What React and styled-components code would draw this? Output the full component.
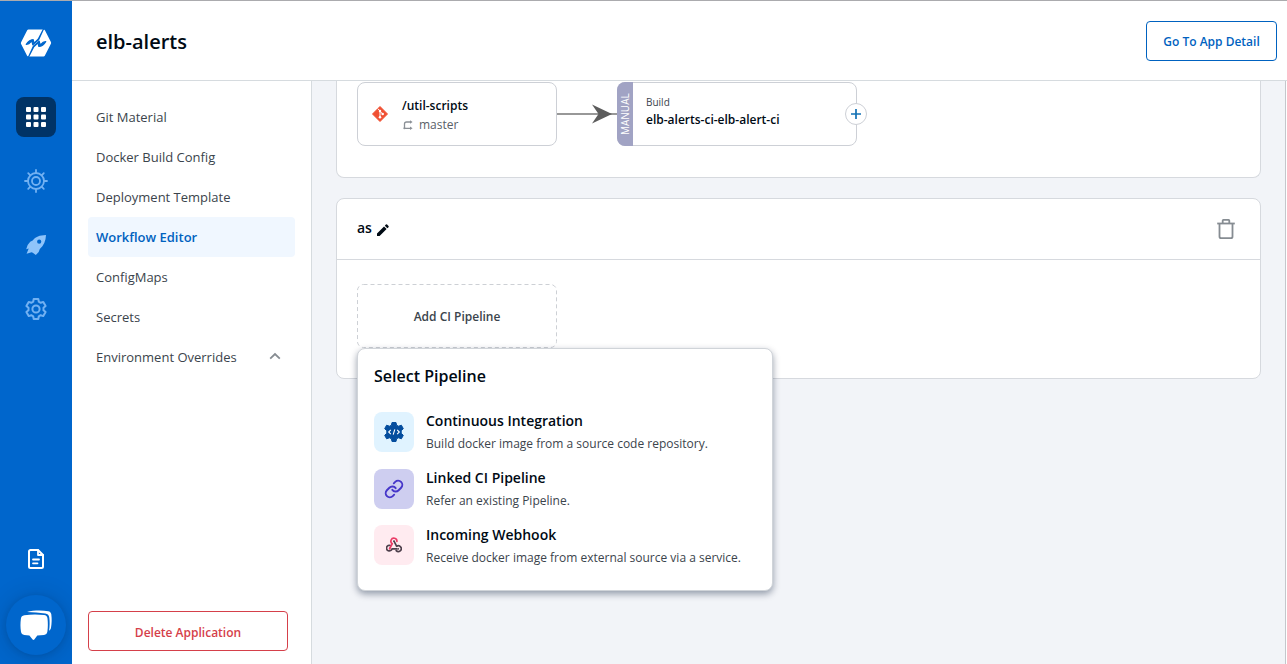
import React from "react";
import styled, { createGlobalStyle, css } from "styled-components";

const GlobalStyle = createGlobalStyle`
  *, *::before, *::after { box-sizing: border-box; }
  html, body, #root { height: 100%; }
  body {
    margin: 0;
    font-family: "Open Sans", "Noto Sans", sans-serif;
    font-size: 13px;
    color: #000a14;
    background: #f2f4f8;
    overflow: hidden;
  }
  button { font-family: inherit; cursor: pointer; }
  svg { display: block; flex: none; }
`;

const Shell = styled.div`
  display: flex;
  height: 100vh;
  border-top: 1px solid #ababae;
`;

const Rail = styled.nav`
  width: 72px;
  flex: none;
  display: flex;
  flex-direction: column;
  align-items: center;
  background: #0066cc;
  padding-top: 22px;
`;

const Brand = styled.a`
  height: 40px;
  display: flex;
  align-items: center;
`;

const RailList = styled.div`
  display: flex;
  flex-direction: column;
  gap: 24px;
  margin-top: 34px;
`;

const RailItem = styled.a`
  width: 40px;
  height: 40px;
  border-radius: 8px;
  display: flex;
  align-items: center;
  justify-content: center;
  background: ${(p) => (p.$active ? "#003366" : "transparent")};
`;

const RailFooter = styled.div`
  margin-top: auto;
  display: flex;
  flex-direction: column;
  align-items: center;
  padding-bottom: 9px;
  gap: 16px;
`;

const ChatButton = styled.button`
  width: 60px;
  height: 60px;
  border: 0;
  padding: 0;
  border-radius: 50%;
  background: #0066cc;
  display: flex;
  align-items: center;
  justify-content: center;
  box-shadow: 0 1px 6px rgba(0, 0, 0, 0.1), 0 2px 26px rgba(0, 0, 0, 0.16);
`;

const Page = styled.div`
  flex: 1;
  min-width: 0;
  display: flex;
  flex-direction: column;
  background: #fff;
`;

const Header = styled.header`
  height: 80px;
  flex: none;
  display: flex;
  align-items: center;
  justify-content: space-between;
  padding: 0 10px 0 24px;
  border-bottom: 1px solid #d6dbdf;
`;

const Title = styled.h1`
  margin: 0;
  padding-top: 2px;
  font-size: 20px;
  line-height: 30px;
  font-weight: 600;
  color: #000a14;
`;

const OutlineButton = styled.button`
  height: 40px;
  width: ${(p) => p.$width}px;
  padding: 2px 0 0;
  background: #fff;
  border: 1px solid ${(p) => p.$color};
  border-radius: 4px;
  color: ${(p) => p.$color};
  font-size: 12px;
  font-weight: 600;
`;

const Body = styled.div`
  flex: 1;
  min-height: 0;
  display: flex;
`;

const Menu = styled.aside`
  width: 240px;
  flex: none;
  display: flex;
  flex-direction: column;
  align-items: flex-start;
  padding: 16px 16px 13px;
  border-right: 1px solid #d6dbdf;
`;

const MenuItem = styled.a`
  width: 207px;
  height: 40px;
  display: flex;
  align-items: center;
  justify-content: space-between;
  padding: 0 12px 0 8px;
  border-radius: 4px;
  font-size: 13px;
  color: #3b444c;
  ${(p) =>
    p.$active &&
    css`
      background: #f0f7ff;
      color: #0062c0;
      font-weight: 600;
    `}
`;

const MenuFooter = styled.div`
  margin-top: auto;
`;

const Canvas = styled.main`
  flex: 1;
  min-width: 0;
  padding: 0 24px;
  background: #f2f4f8;
  border-right: 1px solid #c4c7cc;
  margin-right: 1px;
`;

const Card = styled.section`
  border: 1px solid #d6d9de;
  border-radius: 8px;
  background: #fff;
  ${(p) =>
    p.$clipped &&
    css`
      border-top: 0;
      border-top-left-radius: 0;
      border-top-right-radius: 0;
      margin-bottom: 20px;
    `}
`;

const CardHeader = styled.div`
  height: 61px;
  display: flex;
  align-items: center;
  justify-content: space-between;
  padding: 0 22px 0 20px;
  border-bottom: 1px solid #d6d9de;
`;

const CardTitle = styled.div`
  display: flex;
  align-items: flex-end;
  gap: 4px;
  font-size: 14px;
  line-height: 18px;
  padding-bottom: 3px;
  font-weight: 600;
`;

const CardBody = styled.div`
  padding: ${(p) => p.$top}px 20px ${(p) => p.$bottom}px;
`;

const Flow = styled.div`
  display: flex;
  align-items: center;
`;

const Node = styled.div`
  position: relative;
  width: ${(p) => p.$width}px;
  height: 64px;
  display: flex;
  align-items: center;
  background: #fff;
  border: 1px solid #cdd0d6;
  border-radius: 8px;
`;

const SourceIcon = styled.span`
  width: 44px;
  display: flex;
  justify-content: center;
`;

const SourceText = styled.div`
  padding-top: 3px;
`;

const NodeTitle = styled.div`
  font-size: 12px;
  line-height: 18px;
  font-weight: 600;
  white-space: nowrap;
`;

const Branch = styled.div`
  display: flex;
  align-items: center;
  gap: 5px;
  font-size: 12px;
  line-height: 20px;
  color: #596168;
`;

const ModeTag = styled.span`
  width: 16px;
  height: 64px;
  margin: -1px 0 -1px -1px;
  flex: none;
  display: flex;
  align-items: center;
  justify-content: center;
  writing-mode: vertical-rl;
  transform: rotate(180deg);
  border-radius: 0 8px 8px 0;
  background: #a1a3c4;
  color: #fff;
  font-size: 10px;
`;

const BuildText = styled.div`
  padding-left: 13px;
  padding-bottom: 6px;
`;

const NodeKind = styled.div`
  font-size: 10px;
  line-height: 16px;
  margin-bottom: 1px;
  color: #3b444c;
`;

const AddTarget = styled.button`
  position: absolute;
  right: -11px;
  top: 20px;
  width: 22px;
  height: 22px;
  border-radius: 50%;
  border: 1px solid #cdd0d6;
  background: #fff;
  padding: 0;
  display: flex;
  align-items: center;
  justify-content: center;
`;

const AddWrap = styled.div`
  position: relative;
  width: 200px;
`;

const AddButton = styled.button`
  width: 200px;
  height: 64px;
  border: 0;
  padding: 0;
  position: relative;
  background: transparent;
  font-size: 12px;
  font-weight: 600;
  color: #3b444c;
`;

const DashFrame = styled.svg`
  position: absolute;
  inset: 0;
`;

const Popup = styled.div`
  position: absolute;
  top: 64px;
  left: 0;
  width: 416px;
  height: 243px;
  padding: 15px 16px;
  border: 1px solid #d0d4d9;
  border-radius: 8px;
  background: #fff;
  box-shadow: 0 3px 7px rgba(0, 20, 50, 0.4);
`;

const PopupTitle = styled.h2`
  margin: 0 0 21px;
  font-size: 16px;
  line-height: 24px;
  font-weight: 600;
`;

const Options = styled.div`
  display: flex;
  flex-direction: column;
`;

const Option = styled.div`
  height: 57px;
  display: flex;
  gap: 12px;
`;

const OptionIcon = styled.span`
  width: 40px;
  height: 40px;
  margin-top: ${(p) => p.$offset}px;
  border-radius: 8px;
  flex: none;
  display: flex;
  align-items: center;
  justify-content: center;
  background: ${(p) => p.$bg};
`;

const OptionTitle = styled.div`
  font-size: 14px;
  line-height: 24px;
  font-weight: 600;
`;

const OptionText = styled.div`
  font-size: 12px;
  line-height: 21px;
  color: #3b444c;
  white-space: nowrap;
`;

const Logo = () => (
  <svg width="32" height="28" viewBox="0 0 32 28">
    <path
      d="M8.400.5h15.200c.6 0 1 .3 1.300.8l6 11.700c.3.600.3 1.200 0 1.800l-6.100 12c-.3.500-.7.700-1.200.7H8.400c-.6 0-1-.3-1.300-.8L1.100 15c-.3-.600-.3-1.200 0-1.800L7.200 1.200c.3-.5.700-.7 1.200-.7Z"
      fill="#fff"
    />
    <g fill="#0066cc" stroke="#0066cc" strokeWidth="1.200" strokeLinejoin="round">
      <path d="M23.500 0 18.200 10.200 14 14.200 13.200 10.600Q9 10.800 6.300 15.400L9 14.600Q11 12.500 12 12.400L12.800 15.800 18.600 10.800Z" />
      <path d="M8.500 28 13.800 17.800 18 13.800 18.800 17.400Q23 17.200 25.700 12.600L23 13.400Q21 15.500 20 15.600L19.200 12.200 13.400 17.200Z" />
    </g>
  </svg>
);

const GridIcon = () => (
  <svg width="20" height="20" viewBox="0 0 20 20" fill="#fff">
    {[0, 7.5, 15].map((y) =>
      [0, 7.5, 15].map((x) => <rect key={`${x}-${y}`} x={x} y={y} width="5" height="5" rx="1" />)
    )}
  </svg>
);

const HelmIcon = () => (
  <svg width="24" height="24" viewBox="0 0 24 24" fill="none" stroke="#72b1f2" strokeWidth="1.8">
    <circle cx="12" cy="12" r="8" />
    <circle cx="12" cy="12" r="4" />
    {[0, 45, 90, 135, 180, 225, 270, 315].map((a) => (
      <path key={a} d="M12 4V1" strokeLinecap="round" transform={`rotate(${a} 12 12)`} />
    ))}
  </svg>
);

const RocketIcon = () => (
  <svg width="24" height="24" viewBox="0 0 24 24">
    <path
      d="M22 2C15.500 2.200 11.500 3.700 8.700 7.500L6.200 8.800Q3.200 11.500 2.200 16.200L4.700 15.500 2.600 20.700 7.600 19.200 8.800 19.700 11.800 22 14.700 19 15.800 16C19.700 12.700 21.800 8 22 2Z"
      fill="#8fc4fa"
    />
    <circle cx="15.200" cy="8.700" r="2.100" fill="#0066cc" />
  </svg>
);

const gear =
  "M9.700 2h4.600l.5 2.700 1.900 1.100 2.600-.9 2.300 4-2.100 1.800v2.600l2.100 1.800-2.300 4-2.600-.9-1.900 1.100-.5 2.700H9.700l-.5-2.700-1.900-1.100-2.600.9-2.300-4 2.100-1.800v-2.600L2.400 8.900l2.300-4 2.600.9 1.900-1.100Z";

const GearIcon = () => (
  <svg width="24" height="24" viewBox="0 0 24 24" fill="none" stroke="#72b1f2" strokeWidth="2" strokeLinejoin="round">
    <path d={gear} />
    <circle cx="12" cy="12" r="3.600" />
  </svg>
);

const DocIcon = () => (
  <svg width="24" height="24" viewBox="0 0 24 24" fill="none" stroke="#fff" strokeWidth="2" strokeLinejoin="round" strokeLinecap="round">
    <path d="M14 3H6.500A1.500 1.500 0 0 0 5 4.500v15A1.500 1.500 0 0 0 6.500 21h11a1.500 1.500 0 0 0 1.500-1.500V8Z" />
    <path d="M14 3v5h5" strokeWidth="1.800" />
    <path d="M9 12.500h6M9 16.300h4.500" strokeWidth="1.800" />
  </svg>
);

const ChatIcon = () => (
  <svg width="32" height="31" viewBox="0 0 32 31" fill="#fff">
    <path d="M7 2C13 .3 22 .2 28.200 1.200 30 1.500 31 2.500 31.300 4.300c.6 4.500.5 9-.3 13.500-.2 1.300-1 2.300-1.900 3 .7-5 .7-9 .2-13-.3-2.600-1.500-3.800-4-4.300C19.500 2.500 13 2.500 7 2Z" />
    <path d="M4.300 5.300c7-1 13.500-1 19.700-.2 2 .3 3.300 1.300 3.500 3.300.5 4.500.5 8.500-.1 13-.3 2-1.400 3.200-3.400 3.500l-6.700.7-3 4c-.5.600-1.200.600-1.700 0l-3.200-4-5.100-.7c-1.900-.3-3-1.300-3.300-3.200C.3 17.200.3 13 .9 8.700c.3-2 1.400-3.100 3.400-3.400Z" />
  </svg>
);

const ChevronUp = () => (
  <svg width="16" height="16" viewBox="0 0 16 16" fill="none" stroke="#868c92" strokeWidth="1.800">
    <path d="M3.200 9.700 8 5l4.800 4.700" />
  </svg>
);

const GitIcon = () => (
  <svg width="16" height="16" viewBox="0 0 16 16">
    <path d="M8 .5 15.500 8 8 15.500.5 8Z" fill="#f05033" stroke="#f05033" strokeWidth="1" strokeLinejoin="round" />
    <path d="M5.800 2.700 8 4.900v6.500M8 5.200l2.700 2.800" stroke="#fff" strokeWidth="1" fill="none" />
    <circle cx="8" cy="4.900" r="1.250" fill="#fff" />
    <circle cx="8" cy="11.300" r="1.250" fill="#fff" />
    <circle cx="10.700" cy="8" r="1.250" fill="#fff" />
  </svg>
);

const BranchIcon = () => (
  <svg width="12" height="12" viewBox="0 0 12 12" fill="none" stroke="#8b9096" strokeWidth="1.300">
    <path d="M9 3H4.500Q2.500 3 2.500 5v4.300H9" />
    <path d="M8 1.300v3.400L10.600 3ZM8 7.600V11l2.600-1.700Z" fill="#8b9096" stroke="none" />
    <circle cx="2.400" cy="9.300" r="1" fill="#8b9096" stroke="none" />
  </svg>
);

const Arrow = () => (
  <svg width="60" height="22" viewBox="0 0 60 22">
    <path d="M0 11h60" stroke="#767676" strokeWidth="1.500" />
    <path d="M35 1.500 55 11 35 20.500 41.500 11Z" fill="#5c5c5c" />
  </svg>
);

const PlusIcon = () => (
  <svg width="12" height="12" viewBox="0 0 12 12" stroke="#1271b5" strokeWidth="1.700">
    <path d="M6 1v10M1 6h10" />
  </svg>
);

const PencilIcon = () => (
  <svg width="14" height="14" viewBox="0 0 14 14" fill="#000a14">
    <path
      transform="translate(-.5 .6)"
      d="M1.500 9.900 8.500 2.900 11.100 5.500 4.100 12.500H1.500ZM9.300 2.100l1.100-1.100q.6-.5 1.200 0l1.400 1.400q.5.600 0 1.200l-1.100 1.100Z"
    />
  </svg>
);

const TrashIcon = () => (
  <svg width="24" height="24" viewBox="0 0 24 24" fill="none" stroke="#868c92" strokeWidth="1.800">
    <path d="M3.200 6.500h17.600" />
    <path d="M8.700 6.500V3.500q0-.7.700-.7h5.200q.7 0 .7.700v3" />
    <path d="M5.500 6.500v13q0 1.700 1.600 1.700h9.800q1.600 0 1.600-1.700v-13" />
  </svg>
);

const CodeGearIcon = () => (
  <svg width="24" height="24" viewBox="0 0 24 24">
    <path
      d="M10 2.500h4l.6 2.700 1.900 1 2.900-1 1.900 3.500-2.100 2v2.600l2.100 2-1.900 3.500-2.900-1-1.900 1-.6 2.700h-4l-.6-2.700-1.900-1-2.900 1-1.900-3.500 2.100-2v-2.600l-2.100-2 1.900-3.500 2.900 1 1.900-1Z"
      fill="#044d9e"
      stroke="#044d9e"
      strokeLinejoin="round"
    />
    <path d="M8.800 9.900 6.700 12l2.100 2.100M15.200 9.900l2.100 2.100-2.100 2.100M12.800 9.400l-1.600 5.200" fill="none" stroke="#fff" strokeWidth="1.100" />
  </svg>
);

const LinkIcon = () => (
  <svg width="20" height="20" viewBox="0 0 24 24" fill="none" stroke="#4636c9" strokeWidth="2.300" strokeLinecap="round">
    <path d="M10 13a5 5 0 0 0 7.540.540l3-3a5 5 0 0 0-7.070-7.070l-1.720 1.710" />
    <path d="M14 11a5 5 0 0 0-7.540-.540l-3 3a5 5 0 0 0 7.070 7.070l1.710-1.710" />
  </svg>
);

const WebhookIcon = () => (
  <svg width="16" height="16" viewBox="0 0 16 16" fill="none" strokeWidth="1.700" strokeLinecap="round" strokeLinejoin="round">
    <path d="M4.400 8.500A2.800 2.800 0 1 0 6 11.900H10.800" stroke="#4d3f4b" />
    <path d="M8 4.200 10.700 9.300A2.900 2.900 0 1 1 10.200 13.600" stroke="#4d3f4b" />
    <path d="M3.700 11.500 6.300 6.700A3 3 0 1 1 10.900 4.400" stroke="#ea3d67" />
    <circle cx="3.700" cy="11.700" r=".9" fill="#ea3d67" />
    <circle cx="12.200" cy="11.800" r=".9" fill="#4d3f4b" />
    <circle cx="8" cy="4.200" r=".8" fill="#4d3f4b" />
  </svg>
);

const menuItems = [
  { label: "Git Material" },
  { label: "Docker Build Config" },
  { label: "Deployment Template" },
  { label: "Workflow Editor", active: true },
  { label: "ConfigMaps" },
  { label: "Secrets" },
  { label: "Environment Overrides", expandable: true },
];

const pipelines = [
  { title: "Continuous Integration", text: "Build docker image from a source code repository.", bg: "#e0f3ff", offset: 3, icon: <CodeGearIcon /> },
  { title: "Linked CI Pipeline", text: "Refer an existing Pipeline.", bg: "#cecef0", offset: 3, icon: <LinkIcon /> },
  { title: "Incoming Webhook", text: "Receive docker image from external source via a service.", bg: "#ffebf0", offset: 2, icon: <WebhookIcon /> },
];

export default function App() {
  return (
    <>
      <GlobalStyle />
      <Shell>
        <Rail>
          <Brand><Logo /></Brand>
          <RailList>
            <RailItem $active><GridIcon /></RailItem>
            <RailItem><HelmIcon /></RailItem>
            <RailItem><RocketIcon /></RailItem>
            <RailItem><GearIcon /></RailItem>
          </RailList>
          <RailFooter>
            <RailItem><DocIcon /></RailItem>
            <ChatButton aria-label="Chat"><ChatIcon /></ChatButton>
          </RailFooter>
        </Rail>
        <Page>
          <Header>
            <Title>elb-alerts</Title>
            <OutlineButton $width={131} $color="#0062c0">Go To App Detail</OutlineButton>
          </Header>
          <Body>
            <Menu>
              {menuItems.map((m) => (
                <MenuItem key={m.label} $active={m.active}>
                  {m.label}
                  {m.expandable && <ChevronUp />}
                </MenuItem>
              ))}
              <MenuFooter>
                <OutlineButton $width={200} $color="#d5404a">Delete Application</OutlineButton>
              </MenuFooter>
            </Menu>
            <Canvas>
              <Card $clipped>
                <CardBody $top={1} $bottom={31}>
                  <Flow>
                    <Node $width={200}>
                      <SourceIcon><GitIcon /></SourceIcon>
                      <SourceText>
                        <NodeTitle>/util-scripts</NodeTitle>
                        <Branch><BranchIcon />master</Branch>
                      </SourceText>
                    </Node>
                    <Arrow />
                    <Node $width={240}>
                      <ModeTag>MANUAL</ModeTag>
                      <BuildText>
                        <NodeKind>Build</NodeKind>
                        <NodeTitle>elb-alerts-ci-elb-alert-ci</NodeTitle>
                      </BuildText>
                      <AddTarget aria-label="Add"><PlusIcon /></AddTarget>
                    </Node>
                  </Flow>
                </CardBody>
              </Card>
              <Card>
                <CardHeader>
                  <CardTitle>as <PencilIcon /></CardTitle>
                  <TrashIcon />
                </CardHeader>
                <CardBody $top={24} $bottom={30}>
                  <AddWrap>
                    <AddButton>
                      <DashFrame width="200" height="64" viewBox="0 0 200 64">
                        <rect x=".5" y=".5" width="199" height="63" rx="6" fill="none" stroke="#cdd0d5" strokeDasharray="4 3" />
                      </DashFrame>
                      Add CI Pipeline
                    </AddButton>
                    <Popup>
                      <PopupTitle>Select Pipeline</PopupTitle>
                      <Options>
                        {pipelines.map((p) => (
                          <Option key={p.title}>
                            <OptionIcon $bg={p.bg} $offset={p.offset}>{p.icon}</OptionIcon>
                            <div>
                              <OptionTitle>{p.title}</OptionTitle>
                              <OptionText>{p.text}</OptionText>
                            </div>
                          </Option>
                        ))}
                      </Options>
                    </Popup>
                  </AddWrap>
                </CardBody>
              </Card>
            </Canvas>
          </Body>
        </Page>
      </Shell>
    </>
  );
}
